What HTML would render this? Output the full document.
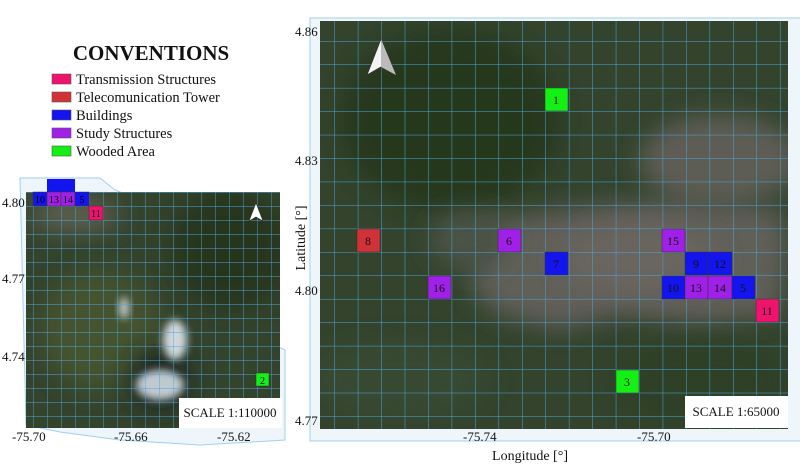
<!DOCTYPE html>
<html><head><meta charset="utf-8"><style>
html,body{margin:0;padding:0;background:#fff;width:800px;height:474px;overflow:hidden}
svg{display:block}
text{font-family:"Liberation Serif",serif}
</style></head><body>
<svg width="800" height="474" viewBox="0 0 800 474" xmlns="http://www.w3.org/2000/svg">
<defs>
<pattern id="gR" x="334.4" y="41" width="23.45" height="23.45" patternUnits="userSpaceOnUse">
<path d="M0 0V23.45M0 0H23.45" stroke="#4da6dc" stroke-width="1" fill="none"/></pattern>
<pattern id="gL" x="33" y="192" width="14" height="14" patternUnits="userSpaceOnUse">
<path d="M0 0V14M0 0H14" stroke="#4da6dc" stroke-width="0.9" fill="none"/></pattern>
<filter id="bl" x="-50%" y="-50%" width="200%" height="200%"><feGaussianBlur stdDeviation="12"/></filter>
<filter id="bl2" x="-50%" y="-50%" width="200%" height="200%"><feGaussianBlur stdDeviation="4"/></filter>
<clipPath id="cR"><rect x="320" y="21" width="468" height="408"/></clipPath>
<clipPath id="cL"><rect x="26" y="192" width="254" height="236"/></clipPath>
</defs>

<!-- Legend -->
<text x="151" y="60" font-size="21" font-weight="bold" text-anchor="middle" fill="#111">CONVENTIONS</text>
<g font-size="14.5" fill="#111">
<rect x="52" y="74" width="19" height="10" fill="#f0136e" stroke="#555" stroke-width=".6"/><text x="76" y="84">Transmission Structures</text>
<rect x="52" y="92" width="19" height="10" fill="#d03238" stroke="#555" stroke-width=".6"/><text x="76" y="102">Telecomunication Tower</text>
<rect x="52" y="110" width="19" height="10" fill="#1414ee" stroke="#555" stroke-width=".6"/><text x="76" y="120">Buildings</text>
<rect x="52" y="128" width="19" height="10" fill="#a020e8" stroke="#555" stroke-width=".6"/><text x="76" y="138">Study Structures</text>
<rect x="52" y="146" width="19" height="10" fill="#14f014" stroke="#555" stroke-width=".6"/><text x="76" y="156">Wooded Area</text>
</g>

<!-- Left map -->
<path d="M20 178H100L115 190L165 210L185 240L210 290L245 330L285 350V440L200 445L120 440L60 432L26 425Z" fill="#eef6fc" stroke="#9fd0ef" stroke-width="1"/>
<g clip-path="url(#cL)">
<rect x="26" y="192" width="254" height="236" fill="#34432c"/>
<ellipse cx="75" cy="215" rx="45" ry="18" fill="#5c5e50" filter="url(#bl)"/>
<ellipse cx="230" cy="250" rx="60" ry="60" fill="#26341f" filter="url(#bl)"/>
<ellipse cx="100" cy="330" rx="60" ry="60" fill="#44532f" filter="url(#bl)"/>
<ellipse cx="160" cy="380" rx="30" ry="30" fill="#1e2822" filter="url(#bl)"/>
<ellipse cx="175" cy="340" rx="12" ry="20" fill="#cfd7db" filter="url(#bl2)"/>
<ellipse cx="160" cy="385" rx="24" ry="15" fill="#bfc9cf" filter="url(#bl2)"/>
<ellipse cx="124" cy="308" rx="5" ry="11" fill="#bfc9cf" filter="url(#bl2)"/>
<rect x="26" y="192" width="254" height="236" fill="url(#gL)"/>
</g>
<g font-size="10" text-anchor="middle" font-family="Liberation Sans,sans-serif">
<rect x="47" y="179" width="28" height="13" fill="#1414ee"/>
<rect x="33" y="192" width="14" height="14" fill="#1414ee" stroke="#333" stroke-width=".5"/><text x="40" y="203">10</text>
<rect x="47" y="192" width="14" height="14" fill="#a020e8" stroke="#333" stroke-width=".5"/><text x="54" y="203">13</text>
<rect x="61" y="192" width="14" height="14" fill="#a020e8" stroke="#333" stroke-width=".5"/><text x="68" y="203">14</text>
<rect x="75" y="192" width="14" height="14" fill="#1414ee" stroke="#333" stroke-width=".5"/><text x="82" y="203">5</text>
<rect x="89" y="206" width="14" height="14" fill="#f0136e" stroke="#333" stroke-width=".5"/><text x="96" y="217">11</text>
<rect x="256" y="373" width="13" height="13" fill="#14f014" stroke="#333" stroke-width=".5"/><text x="262.5" y="384">2</text>
</g>
<path d="M256 203L249 221L256 217L263 221Z" fill="#fff" stroke="#333" stroke-width=".6"/>
<rect x="179" y="398" width="103" height="30" fill="#fff"/>
<text x="230" y="417" font-size="13" text-anchor="middle" fill="#111">SCALE 1:110000</text>
<g font-size="13" fill="#111">
<text x="2" y="207">4.80</text><text x="2" y="283">4.77</text><text x="2" y="361">4.74</text>
<text x="12" y="441">-75.70</text><text x="114" y="441">-75.66</text><text x="217" y="441">-75.62</text>
</g>

<!-- Right map -->
<rect x="310" y="18" width="496" height="423" fill="#eef6fc" stroke="#9fd0ef"/>
<g clip-path="url(#cR)">
<rect x="320" y="21" width="468" height="408" fill="#33432c"/>
<ellipse cx="450" cy="120" rx="110" ry="90" fill="#28371f" filter="url(#bl)"/>
<ellipse cx="720" cy="160" rx="80" ry="45" fill="#5d5d55" filter="url(#bl)"/>
<path d="M490 220L600 205L680 200L780 210L788 240L780 315L700 325L620 315L560 330L500 315L470 290Z" fill="#615e58" filter="url(#bl)"/>
<ellipse cx="640" cy="260" rx="80" ry="35" fill="#69655f" filter="url(#bl)"/>
<ellipse cx="470" cy="240" rx="40" ry="30" fill="#4c5246" filter="url(#bl)"/>
<ellipse cx="400" cy="380" rx="90" ry="40" fill="#394930" filter="url(#bl)"/>
<ellipse cx="700" cy="380" rx="90" ry="40" fill="#2f3f26" filter="url(#bl)"/>
<rect x="320" y="21" width="468" height="408" fill="url(#gR)"/>
</g>
<g stroke="#333" stroke-width=".5">
<rect x="545" y="88" width="23" height="23" fill="#14f014"/>
<rect x="357" y="229" width="23" height="23" fill="#d03238"/>
<rect x="498" y="229" width="23" height="23" fill="#a020e8"/>
<rect x="545" y="252" width="23" height="23" fill="#1414ee"/>
<rect x="428" y="276" width="23" height="23" fill="#a020e8"/>
<rect x="662" y="229" width="23" height="23" fill="#a020e8"/>
<rect x="685" y="252" width="23" height="23" fill="#1414ee"/>
<rect x="708" y="252" width="24" height="23" fill="#1414ee"/>
<rect x="662" y="276" width="23" height="23" fill="#1414ee"/>
<rect x="685" y="276" width="23" height="23" fill="#a020e8"/>
<rect x="708" y="276" width="24" height="23" fill="#a020e8"/>
<rect x="732" y="276" width="23" height="23" fill="#1414ee"/>
<rect x="756" y="299" width="23" height="23" fill="#f0136e"/>
<rect x="616" y="370" width="23" height="23" fill="#14f014"/>
</g>
<g font-size="12" text-anchor="middle" font-family="Liberation Sans,sans-serif" fill="#111">
<text x="556" y="104">1</text><text x="368" y="245">8</text><text x="509" y="245">6</text>
<text x="556" y="268">7</text><text x="439" y="292">16</text><text x="673" y="245">15</text>
<text x="696" y="268">9</text><text x="720" y="268">12</text><text x="673" y="292">10</text>
<text x="696" y="292">13</text><text x="720" y="292">14</text><text x="743" y="292">5</text>
<text x="767" y="315">11</text><text x="627" y="386">3</text>
</g>
<path d="M381 39L367 75L381 67L396 75Z" fill="#f4f4f4" stroke="#333" stroke-width=".8"/>
<path d="M381 39L381 67L396 75Z" fill="#bbb"/>
<rect x="685" y="396" width="103" height="32" fill="#fff"/>
<text x="736" y="416" font-size="13" text-anchor="middle" fill="#111">SCALE 1:65000</text>
<g font-size="13" fill="#111">
<text x="295" y="36">4.86</text><text x="295" y="165">4.83</text><text x="295" y="295">4.80</text><text x="295" y="425">4.77</text>
<text x="463" y="441">-75.74</text><text x="637" y="441">-75.70</text>
</g>
<text x="530" y="460" font-size="14" text-anchor="middle" fill="#111">Longitude [°]</text>
<text transform="translate(305 238) rotate(-90)" font-size="14" text-anchor="middle" fill="#111">Latitude [°]</text>
</svg>
</body></html>
